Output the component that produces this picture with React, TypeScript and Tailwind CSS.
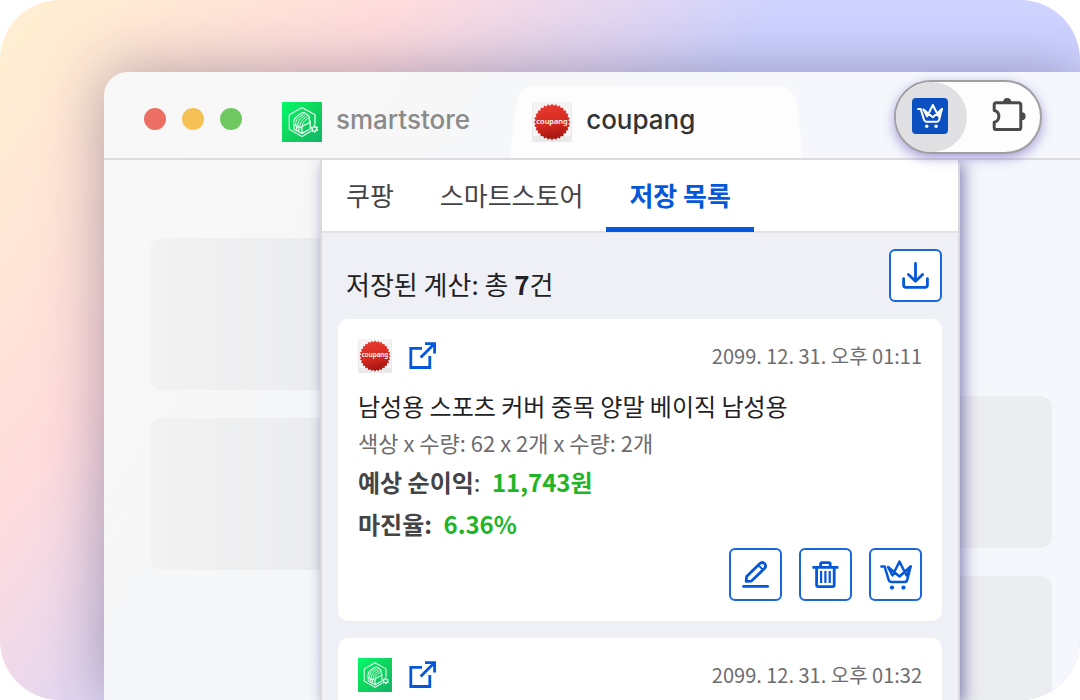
import { useId } from "react"
import type { ReactNode } from "react"
import clsx from "clsx"

type Store = "coupang" | "smartstore"

type SavedItem = {
  store: Store
  date: string
  title: string
  option: string
  profit: string
  margin: string
}

const tabs = ["쿠팡", "스마트스토어", "저장 목록"]

const items: SavedItem[] = [
  {
    store: "coupang",
    date: "2099. 12. 31. 오후 01:11",
    title: "남성용 스포츠 커버 중목 양말 베이직 남성용",
    option: "색상 x 수량: 62 x 2개 x 수량: 2개",
    profit: "11,743원",
    margin: "6.36%",
  },
  {
    store: "smartstore",
    date: "2099. 12. 31. 오후 01:32",
    title: "",
    option: "",
    profit: "",
    margin: "",
  },
]

// outline of the serrated seal, 28 teeth
const seal = Array.from({ length: 56 }, (_, i) => {
  const r = i % 2 === 0 ? 18.2 : 16.4
  const a = (i * Math.PI) / 28
  return `${(20 + r * Math.cos(a)).toFixed(2)},${(20 + r * Math.sin(a)).toFixed(2)}`
}).join(" ")

function CoupangLogo({ className }: { className: string }) {
  const id = useId()
  return (
    <svg viewBox="0 0 40 40" className={className} role="img" aria-label="coupang">
      <defs>
        <linearGradient id={id} x1="0.4" y1="0" x2="0.6" y2="1">
          <stop offset="0" stopColor="#e8392f" />
          <stop offset="0.55" stopColor="#d42a20" />
          <stop offset="1" stopColor="#9c140c" />
        </linearGradient>
      </defs>
      <rect width="40" height="40" rx="1.5" fill="#e9e9e9" />
      <rect x="1" width="38" height="34" rx="1" fill="#f4f4f4" />
      <polygon points={seal} fill={`url(#${id})`} />
      <text
        x="20"
        y="21.6"
        textAnchor="middle"
        fill="#fff"
        fontSize="7.4"
        fontWeight="600"
        fontFamily="'Noto Sans', sans-serif"
      >
        coupang
      </text>
    </svg>
  )
}

function SmartstoreLogo({ className }: { className: string }) {
  const id = useId()
  return (
    <svg viewBox="0 0 40 40" className={className} role="img" aria-label="smartstore">
      <defs>
        <linearGradient id={id} x1="0" y1="0" x2="1" y2="1">
          <stop offset="0" stopColor="#06f96c" />
          <stop offset="0.5" stopColor="#0fd45d" />
          <stop offset="1" stopColor="#12b368" />
        </linearGradient>
      </defs>
      <rect width="40" height="40" fill={`url(#${id})`} />
      <g fill="none" stroke="#eafff2" strokeWidth="1.2" strokeLinejoin="round">
        <path d="M33 22.8V12.8L20 5.6 7.3 12.8V27.2L20 34.4 28.6 29.4" />
        <path d="M12 22.5V27.2L20 31.4 28.2 27V18.6M20 31.4V24.4L28.2 20.2M12 22.8l8 3.4" />
        <path d="M14.4 28.2V24.8l2.4 1V29.4" />
        <path d="M11.8 22.8C10.6 17.5 13.4 14.6 19.4 11.2L22 10.6 27.4 14.4V20" />
        <path
          d="M14 24C12.8 18.4 15.6 15.8 21.2 12.4M16.2 24.4C15 19.6 17.8 17 23 13.4M18.4 24.8C17.2 20.8 20 18.2 25 14.4M20.6 24.4C19.6 21.6 22.2 19 27 15.6"
          strokeWidth="1"
        />
      </g>
      <circle cx="32.4" cy="27" r="3" fill="none" stroke="#eafff2" strokeWidth="1.6" strokeDasharray="1.9 1.24" />
      <circle cx="32.4" cy="27" r="2.2" fill="none" stroke="#eafff2" strokeWidth="1.2" />
    </svg>
  )
}

function StoreLogo({ store, className }: { store: Store; className: string }) {
  return store === "coupang" ? <CoupangLogo className={className} /> : <SmartstoreLogo className={className} />
}

function CartIcon({ className }: { className: string }) {
  return (
    <svg
      viewBox="0 0 32 32"
      className={className}
      fill="none"
      stroke="currentColor"
      strokeWidth="2.5"
      strokeLinecap="round"
      strokeLinejoin="round"
    >
      <path d="M1.4 7.5H4.6L8.6 20.6Q9.3 23 11.6 23H24.4Q26.7 23 27.3 20.6L30.6 7.5" />
      <path d="M8 8L12.5 16.5 19.5 2.5 26.5 16.5 30.6 7.5M8 8L19.5 17.5 30.6 7.5" />
      <circle cx="12" cy="28.6" r="2.1" fill="currentColor" stroke="none" />
      <circle cx="23.5" cy="28.6" r="2.1" fill="currentColor" stroke="none" />
    </svg>
  )
}

function PuzzleIcon() {
  return (
    <svg viewBox="0 0 36 36" className="size-9" fill="none" stroke="#4a4a4c" strokeWidth="3" strokeLinejoin="round">
      <path d="M4.2 5.8H26.6Q28.8 5.8 28.8 8V30.4Q28.8 32.6 26.6 32.6H4.2Q2.2 32.6 2.2 30.4V25.2C8.4 24.4 8.4 14.2 2.2 13.4V8Q2.2 5.8 4.2 5.8Z" />
      <path d="M11.2 5A4 4 0 0 1 19.2 5ZM29.6 15.2A4 4 0 0 1 29.6 23.2Z" fill="#4a4a4c" stroke="none" />
    </svg>
  )
}

function ExternalIcon() {
  return (
    <svg viewBox="0 0 27 27" className="size-[27px]" fill="none" stroke="currentColor" strokeWidth="2.8">
      <path d="M13 6.4H1.8V25.5H20.8V14" />
      <path d="M16 1.6H25.6V11.5M25.4 1.8L11.6 15.6" />
    </svg>
  )
}

function DownloadIcon() {
  return (
    <svg
      viewBox="0 0 27 27"
      className="size-[27px]"
      fill="none"
      stroke="currentColor"
      strokeWidth="2.8"
      strokeLinecap="round"
      strokeLinejoin="round"
    >
      <path d="M13.5 1.4V19M6.4 12.4L13.5 19.2 20.6 12.4" />
      <path d="M1.6 16.6V23Q1.6 25.4 4 25.4H23Q25.4 25.4 25.4 23V16.6" />
    </svg>
  )
}

function PencilIcon() {
  return (
    <svg
      viewBox="0 0 27 27"
      className="size-[27px]"
      fill="none"
      stroke="currentColor"
      strokeWidth="2.8"
      strokeLinecap="round"
    >
      <path d="M1.6 25.4H25.6" />
      <path d="M4.2 20.4L4.6 15.6 17.6 2.7Q20.2.4 22.6 2.6 24.8 5 22.4 7.6L9.2 20.2Z" strokeLinejoin="round" />
      <path d="M16.6 4.4L20.8 8.6" strokeWidth="2" />
    </svg>
  )
}

function TrashIcon() {
  return (
    <svg viewBox="0 0 27 27" className="size-[27px]" fill="none" stroke="currentColor" strokeWidth="2.8">
      <path d="M0.4 6.4H26.4M8.6 6V3Q8.6 1.6 10 1.6H16.8Q18.2 1.6 18.2 3V6" />
      <path d="M4.6 6.4V24Q4.6 25.6 6.2 25.6H20.6Q22.2 25.6 22.2 24V6.4" />
      <path d="M9.1 10V22M13.4 10V22M17.7 10V22" strokeWidth="2.2" />
    </svg>
  )
}

function IconButton({ label, children }: { label: string; children: ReactNode }) {
  return (
    <button
      type="button"
      aria-label={label}
      className="flex size-[53px] items-center justify-center rounded-md border-2 border-[#1c66dc] bg-white text-[#0558d9]"
    >
      {children}
    </button>
  )
}

function BrowserBar() {
  return (
    <header className="flex h-[88px] items-end border-b-2 border-[#dcdce0] pl-10">
      <div className="mt-2 flex gap-4 self-center">
        <span className="size-[22px] rounded-full bg-[#eb6f63]" />
        <span className="size-[22px] rounded-full bg-[#f5c157]" />
        <span className="size-[22px] rounded-full bg-[#6fc85f]" />
      </div>
      <a href="#smartstore" className="ml-10 flex h-[72px] items-center gap-3.5 text-[#8a8a8a]">
        <SmartstoreLogo className="size-10" />
        <span className="pb-1.5 text-[26px] font-medium">smartstore</span>
      </a>
      <a
        href="#coupang"
        className="relative ml-10 flex h-[72px] w-[293px] items-center gap-3.5 pl-[22px] text-[#333335]"
      >
        <svg viewBox="0 0 293 72" preserveAspectRatio="none" className="absolute inset-0 size-full" aria-hidden="true">
          <path d="M0 72L6 20Q9 0 27 0H266Q284 0 287 20L293 72Z" fill="#fdfdfe" />
        </svg>
        <CoupangLogo className="relative size-10" />
        <span className="relative pb-1.5 text-[26px] font-medium">coupang</span>
      </a>
      <div className="z-10 mt-1 mr-[38px] ml-auto flex self-center overflow-hidden rounded-full border-2 border-[#a0a0a2] bg-[#fdfdfe] shadow-[0_4px_12px_rgba(70,50,170,0.45)]">
        <button
          type="button"
          aria-label="마진 계산기"
          className="flex h-[70px] w-[71px] items-center justify-center rounded-r-full bg-[#e0e0e2] pr-1 pb-0.5"
        >
          <span className="flex size-9 items-center justify-center rounded bg-[#0b50c0] text-white">
            <CartIcon className="size-[26px]" />
          </span>
        </button>
        <button
          type="button"
          aria-label="확장 프로그램"
          className="flex h-[70px] w-[73px] items-center justify-center pb-1 pl-3"
        >
          <PuzzleIcon />
        </button>
      </div>
    </header>
  )
}

function SavedCard({ item }: { item: SavedItem }) {
  return (
    <article className="rounded-[10px] bg-white p-5">
      <div className="flex items-center">
        <StoreLogo store={item.store} className="size-[34px]" />
        <a href="#item" aria-label="상품 페이지 열기" className="ml-[17px] pb-0.5 text-[#0558d9]">
          <ExternalIcon />
        </a>
        <time className="ml-auto text-[20px] leading-8 text-[#6d6d6f]">{item.date}</time>
      </div>
      {item.title && (
        <>
          <h2 className="mt-[15px] text-2xl leading-9 text-[#222225]">{item.title}</h2>
          <p className="text-[22px] leading-9 text-[#6d6d6f]">{item.option}</p>
          <p className="mt-px text-2xl leading-[42px] text-[#444446]">
            <b>예상 순이익</b>: <b className="ml-1.5 text-[#1fb527]">{item.profit}</b>
          </p>
          <p className="text-2xl leading-[42px] font-bold text-[#444446]">
            마진율: <span className="ml-1.5 text-[#1fb527]">{item.margin}</span>
          </p>
          <div className="mt-[3px] flex justify-end gap-[17px]">
            <IconButton label="수정">
              <PencilIcon />
            </IconButton>
            <IconButton label="삭제">
              <TrashIcon />
            </IconButton>
            <IconButton label="담기">
              <CartIcon className="size-8" />
            </IconButton>
          </div>
        </>
      )}
    </article>
  )
}

function Popup() {
  const active = "저장 목록"

  return (
    <main className="z-0 w-[640px] shrink-0 border-x-2 border-[#d9d9de] bg-[#eff0f5] font-['Noto_Sans_CJK_KR',sans-serif] shadow-[4px_4px_14px_rgba(50,40,120,0.55)]">
      <nav className="flex h-[73px] border-b-2 border-[#e2e2e4] bg-white pl-px">
        {tabs.map((tab) => (
          <button
            key={tab}
            type="button"
            className={clsx(
              "-mb-px border-b-5 px-[23px] pt-0.5 text-[26px] leading-9",
              tab === active ? "border-[#0558d9] font-bold text-[#0558d9]" : "border-transparent text-[#444446]",
            )}
          >
            {tab}
          </button>
        ))}
      </nav>
      <div className="px-4">
        <div className="flex items-center justify-between pt-4 pb-[17px]">
          <p className="pt-4 pl-2 text-[26px] leading-9 text-[#222225]">
            저장된 계산: 총 <b>7</b>건
          </p>
          <IconButton label="다운로드">
            <DownloadIcon />
          </IconButton>
        </div>
        <div className="flex flex-col gap-[17px]">
          {items.map((item) => (
            <SavedCard key={item.date} item={item} />
          ))}
        </div>
      </div>
    </main>
  )
}

export default function App() {
  return (
    <div className="flex h-screen flex-col overflow-hidden rounded-[60px] bg-[linear-gradient(128deg,#fff0d0_0%,#ffdcde_25%,#cfd3ff_48%)] pt-[72px] pl-[104px] font-[family-name:Inter,sans-serif]">
      <div className="flex min-h-0 flex-1 flex-col rounded-tl-3xl bg-[linear-gradient(125deg,#f8f8f8_0%,#f7f7f8_25%,#f5f7fc_50%)] shadow-[0_0_60px_rgba(40,30,70,0.36)]">
        <BrowserBar />
        <div className="flex min-h-0 flex-1 overflow-hidden">
          <div className="flex w-[216px] shrink-0 flex-col gap-7 pt-[78px] pl-[46px]">
            <div className="h-[152px] shrink-0 rounded-l-xl bg-linear-to-r from-[#f2f2f2] to-[#ebecee]" />
            <div className="h-[152px] shrink-0 rounded-l-xl bg-linear-to-r from-[#f2f2f2] to-[#ebecee]" />
          </div>
          <Popup />
          <div className="flex flex-1 flex-col gap-7 pt-[236px] pr-7">
            <div className="h-[152px] shrink-0 rounded-r-xl bg-[#ecedf1]" />
            <div className="h-[152px] shrink-0 rounded-r-xl bg-[#ecedf1]" />
          </div>
        </div>
      </div>
    </div>
  )
}
